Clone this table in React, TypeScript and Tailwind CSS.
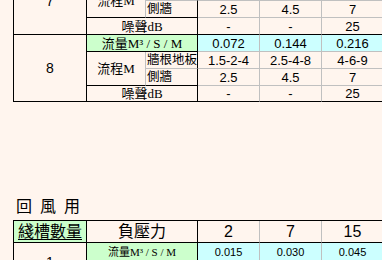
const lbl = "font-['Liberation_Serif','Noto_Sans_CJK_TC',serif] leading-none text-black text-center align-middle p-0 whitespace-nowrap overflow-hidden";
const num = "font-['Liberation_Sans',sans-serif] leading-none text-black text-center align-middle p-0 whitespace-nowrap overflow-hidden";
const grayR = "border-r border-r-[#c0c0c0]";
const blackR = "border-r border-r-black";
const grayB = "border-b border-b-[#c0c0c0]";
const blackB = "border-b border-b-black";

type G = { n: string; flow: string[]; base: string[]; side: string[]; noise: string[] };

function Group({ g, last }: { g: G; last?: boolean }) {
  return (
    <>
      <tr className="h-[17px]">
        <td rowSpan={4} className={`${num} text-[14px] ${blackR} ${blackB}`}>{g.n}</td>
        <td colSpan={2} className={`${lbl} text-[13px] bg-[#ccffcc] ${blackR} ${blackB}`}>流量M³ / S / M</td>
        {g.flow.map((v, i) => (
          <td key={i} className={`${num} text-[13px] bg-[#ccffff] ${grayR} ${grayB}`}>{v}</td>
        ))}
      </tr>
      <tr className="h-[17px]">
        <td rowSpan={2} className={`${lbl} text-[13px] ${grayR} ${blackB}`}>流程M</td>
        <td className={`${lbl} text-[12.5px] text-left pl-[1px] ${blackR} ${grayB}`}>牆根地板</td>
        {g.base.map((v, i) => (
          <td key={i} className={`${num} text-[13px] ${grayR} ${grayB}`}>{v}</td>
        ))}
      </tr>
      <tr className="h-[17px]">
        <td className={`${lbl} text-[12.5px] text-left pl-[1px] ${blackR} ${blackB}`}>側牆</td>
        {g.side.map((v, i) => (
          <td key={i} className={`${num} text-[13px] ${grayR} ${grayB}`}>{v}</td>
        ))}
      </tr>
      <tr className={last ? "h-[16px]" : "h-[17px]"}>
        <td colSpan={2} className={`${lbl} text-[13px] ${blackR} ${blackB}`}>噪聲dB</td>
        {g.noise.map((v, i) => (
          <td key={i} className={`${num} text-[13px] ${grayR} ${blackB}`}>{v}</td>
        ))}
      </tr>
    </>
  );
}

function Cols() {
  return (
    <colgroup>
      <col className="w-[73px]" />
      <col className="w-[59px]" />
      <col className="w-[52px]" />
      <col className="w-[62px]" />
      <col className="w-[62px]" />
      <col className="w-[62px]" />
    </colgroup>
  );
}

const groups: G[] = [
  { n: "7", flow: ["0.072", "0.144", "0.216"], base: ["1.5-2-4", "2.5-4-8", "4-6-9"], side: ["2.5", "4.5", "7"], noise: ["-", "-", "25"] },
  { n: "8", flow: ["0.072", "0.144", "0.216"], base: ["1.5-2-4", "2.5-4-8", "4-6-9"], side: ["2.5", "4.5", "7"], noise: ["-", "-", "25"] },
];

export default function App() {
  return (
    <div className="w-[382px] h-[260px] overflow-hidden bg-[#fff5ee]">
      <div className="pl-[13px] -mt-[34px]">
        <table className="table-fixed border-separate border-spacing-0 border-l border-t border-black w-[371px]">
          <Cols />
          <tbody>
            <Group g={groups[0]} />
            <Group g={groups[1]} last />
          </tbody>
        </table>
      </div>

      <div className="mt-[93px] mb-[5px] h-[20px] pl-[16px] flex gap-[8px] leading-[20px] text-[16px] text-black font-['Noto_Sans_CJK_TC',sans-serif]">
        <span>回</span>
        <span>風</span>
        <span>用</span>
      </div>

      <div className="pl-[13px]">
        <table className="table-fixed border-separate border-spacing-0 border-l border-t border-black w-[371px]">
          <Cols />
          <tbody>
            <tr className="h-[22px]">
              <td className={`${lbl} text-[16px] bg-[#ccffcc] underline underline-offset-2 ${blackR} ${blackB}`}>綫槽數量</td>
              <td colSpan={2} className={`${lbl} text-[16px] ${blackR} ${blackB}`}>負壓力</td>
              <td className={`${num} text-[16px] ${grayR} ${blackB}`}>2</td>
              <td className={`${num} text-[16px] ${grayR} ${blackB}`}>7</td>
              <td className={`${num} text-[16px] ${grayR} ${blackB}`}>15</td>
            </tr>
            <tr className="h-[19px]">
              <td rowSpan={2} className={`${num} text-[14px] ${blackR} ${blackB}`}>1</td>
              <td colSpan={2} className={`${lbl} text-[11px] bg-[#ccffcc] ${blackR} ${blackB}`}>流量M³ / S / M</td>
              <td className={`${num} text-[11px] bg-[#ccffff] ${grayR} ${grayB}`}>0.015</td>
              <td className={`${num} text-[11px] bg-[#ccffff] ${grayR} ${grayB}`}>0.030</td>
              <td className={`${num} text-[11px] bg-[#ccffff] ${grayR} ${grayB}`}>0.045</td>
            </tr>
            <tr className="h-[19px]">
              <td colSpan={2} className={`${lbl} text-[11px] ${blackR} ${blackB}`}>流程M</td>
              <td className={`${num} text-[11px] ${grayR} ${grayB}`}>1.5-2-4</td>
              <td className={`${num} text-[11px] ${grayR} ${grayB}`}>2.5-4-8</td>
              <td className={`${num} text-[11px] ${grayR} ${grayB}`}>4-6-9</td>
            </tr>
          </tbody>
        </table>
      </div>
    </div>
  );
}
